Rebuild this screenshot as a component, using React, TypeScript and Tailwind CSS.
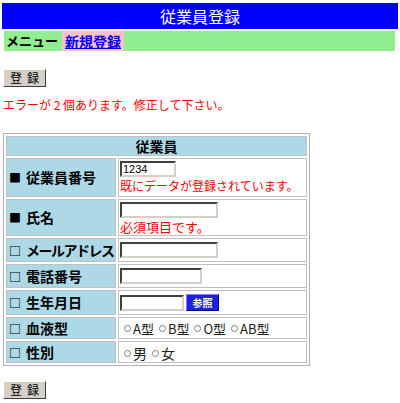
import React from "react";

const font = { fontFamily: '"Noto Sans CJK JP", "MS PGothic", sans-serif' };

function Btn() {
  return (
    <button className="flex items-center justify-center h-[18px] w-[43px] bg-[#d4d0c8] border border-t-white border-l-white border-b-[#404040] border-r-[#404040] text-[12px] leading-none text-black tracking-[5px] pl-[5px]">
      登録
    </button>
  );
}

function Input({ w, value }: { w: string; value?: string }) {
  return (
    <div
      className={`${w} h-[16px] bg-white border-2 border-t-[#404040] border-l-[#404040] border-b-[#d4d0c8] border-r-[#d4d0c8] text-[11px] leading-[12px] pl-[1px] font-['Liberation_Sans']`}
    >
      {value}
    </div>
  );
}

function Radio({ label }: { label: string }) {
  return (
    <span className="inline-flex items-center mr-[5px]">
      <span className="w-[7px] h-[7px] rounded-full border border-[#808080] bg-white mr-[2px]" />
      <span>{label}</span>
    </span>
  );
}

function Label({ req, text, h, tight }: { req?: boolean; text: string; h: string; tight?: boolean }) {
  return (
    <td
      className={`${h} w-[110px] p-0 bg-[#add8e6] border border-[#c0c0c0] pl-[2px] font-bold text-[14px] leading-[16px] whitespace-nowrap align-middle`}
    >
      <span className="text-[12px] mr-[5px]">{req ? "■" : "□"}</span>
      <span className={tight ? "tracking-[-1.5px]" : ""}>{text}</span>
    </td>
  );
}

export default function App() {
  return (
    <div className="w-[400px] h-[403px] overflow-hidden bg-white text-black" style={font}>
      <div className="pt-[3px] px-[2px]">
        <div className="h-[26px] w-[396px] bg-[#0000ff] text-white text-[16px] flex items-center justify-center">
          従業員登録
        </div>
        <div className="mt-[2px] ml-[2px] flex h-[20px] w-[391px] bg-[#90ee90] gap-[2px]">
          <div className="px-[2px] bg-[#90ee90] font-bold text-[13px] leading-[20px]">メニュー</div>
          <div className="px-[3px] bg-[#ffc0cb] font-bold text-[14px] leading-[20px] text-[#0000ee] underline">
            新規登録
          </div>
        </div>
      </div>

      <div className="mt-[18px] ml-[3px] flex">
        <Btn />
      </div>

      <div className="mt-[10px] ml-[3px] text-[12px] text-[#ff0000] leading-[16px]">
        エラーが 2 個あります。修正して下さい。
      </div>

      <table className="mt-[20px] ml-[3px] w-[307px] border border-[#b0b0b0] border-separate border-spacing-[2px]">
        <tbody>
          <tr>
            <td colSpan={2} className="h-[20px] p-0 bg-[#add8e6] border border-[#c0c0c0] text-center font-bold text-[14px] leading-[18px]">
              従業員
            </td>
          </tr>
          <tr>
            <Label req text="従業員番号" h="h-[39px]" />
            <td className="border border-[#c0c0c0] p-0 pl-[1px] pt-[2px] align-top">
              <Input w="w-[56px]" value="1234" />
              <div className="text-[12px] text-[#ff0000] leading-[18px] whitespace-nowrap">既にデータが登録されています。</div>
            </td>
          </tr>
          <tr>
            <Label req text="氏名" h="h-[37px]" />
            <td className="border border-[#c0c0c0] p-0 pl-[1px] pt-[2px] align-top">
              <Input w="w-[98px]" />
              <div className="text-[13px] text-[#ff0000] leading-[17px]">必須項目です。</div>
            </td>
          </tr>
          <tr>
            <Label text="メールアドレス" h="h-[24px]" tight />
            <td className="border border-[#c0c0c0] p-0 pl-[1px] align-middle">
              <Input w="w-[98px]" />
            </td>
          </tr>
          <tr>
            <Label text="電話番号" h="h-[24px]" />
            <td className="border border-[#c0c0c0] p-0 pl-[1px] align-middle">
              <Input w="w-[82px]" />
            </td>
          </tr>
          <tr>
            <Label text="生年月日" h="h-[25px]" />
            <td className="border border-[#c0c0c0] p-0 pl-[1px] align-middle">
              <div className="flex items-center gap-[2px]">
                <Input w="w-[64px]" />
                <span className="h-[17px] w-[33px] bg-[#2020e0] border border-t-[#8080ff] border-l-[#8080ff] border-b-[#000080] border-r-[#000080] text-white text-[10px] font-bold flex items-center justify-center">
                  参照
                </span>
              </div>
            </td>
          </tr>
          <tr>
            <Label text="血液型" h="h-[22px]" />
            <td className="border border-[#c0c0c0] p-0 pl-[5px] align-middle text-[13px] leading-[16px] text-[#202020]">
              <Radio label="A型" />
              <Radio label="B型" />
              <Radio label="O型" />
              <Radio label="AB型" />
            </td>
          </tr>
          <tr>
            <Label text="性別" h="h-[22px]" />
            <td className="border border-[#c0c0c0] p-0 pl-[5px] align-middle text-[14px] leading-[16px] text-[#202020]">
              <Radio label="男" />
              <Radio label="女" />
            </td>
          </tr>
        </tbody>
      </table>

      <div className="mt-[15px] ml-[3px] flex">
        <Btn />
      </div>
    </div>
  );
}
